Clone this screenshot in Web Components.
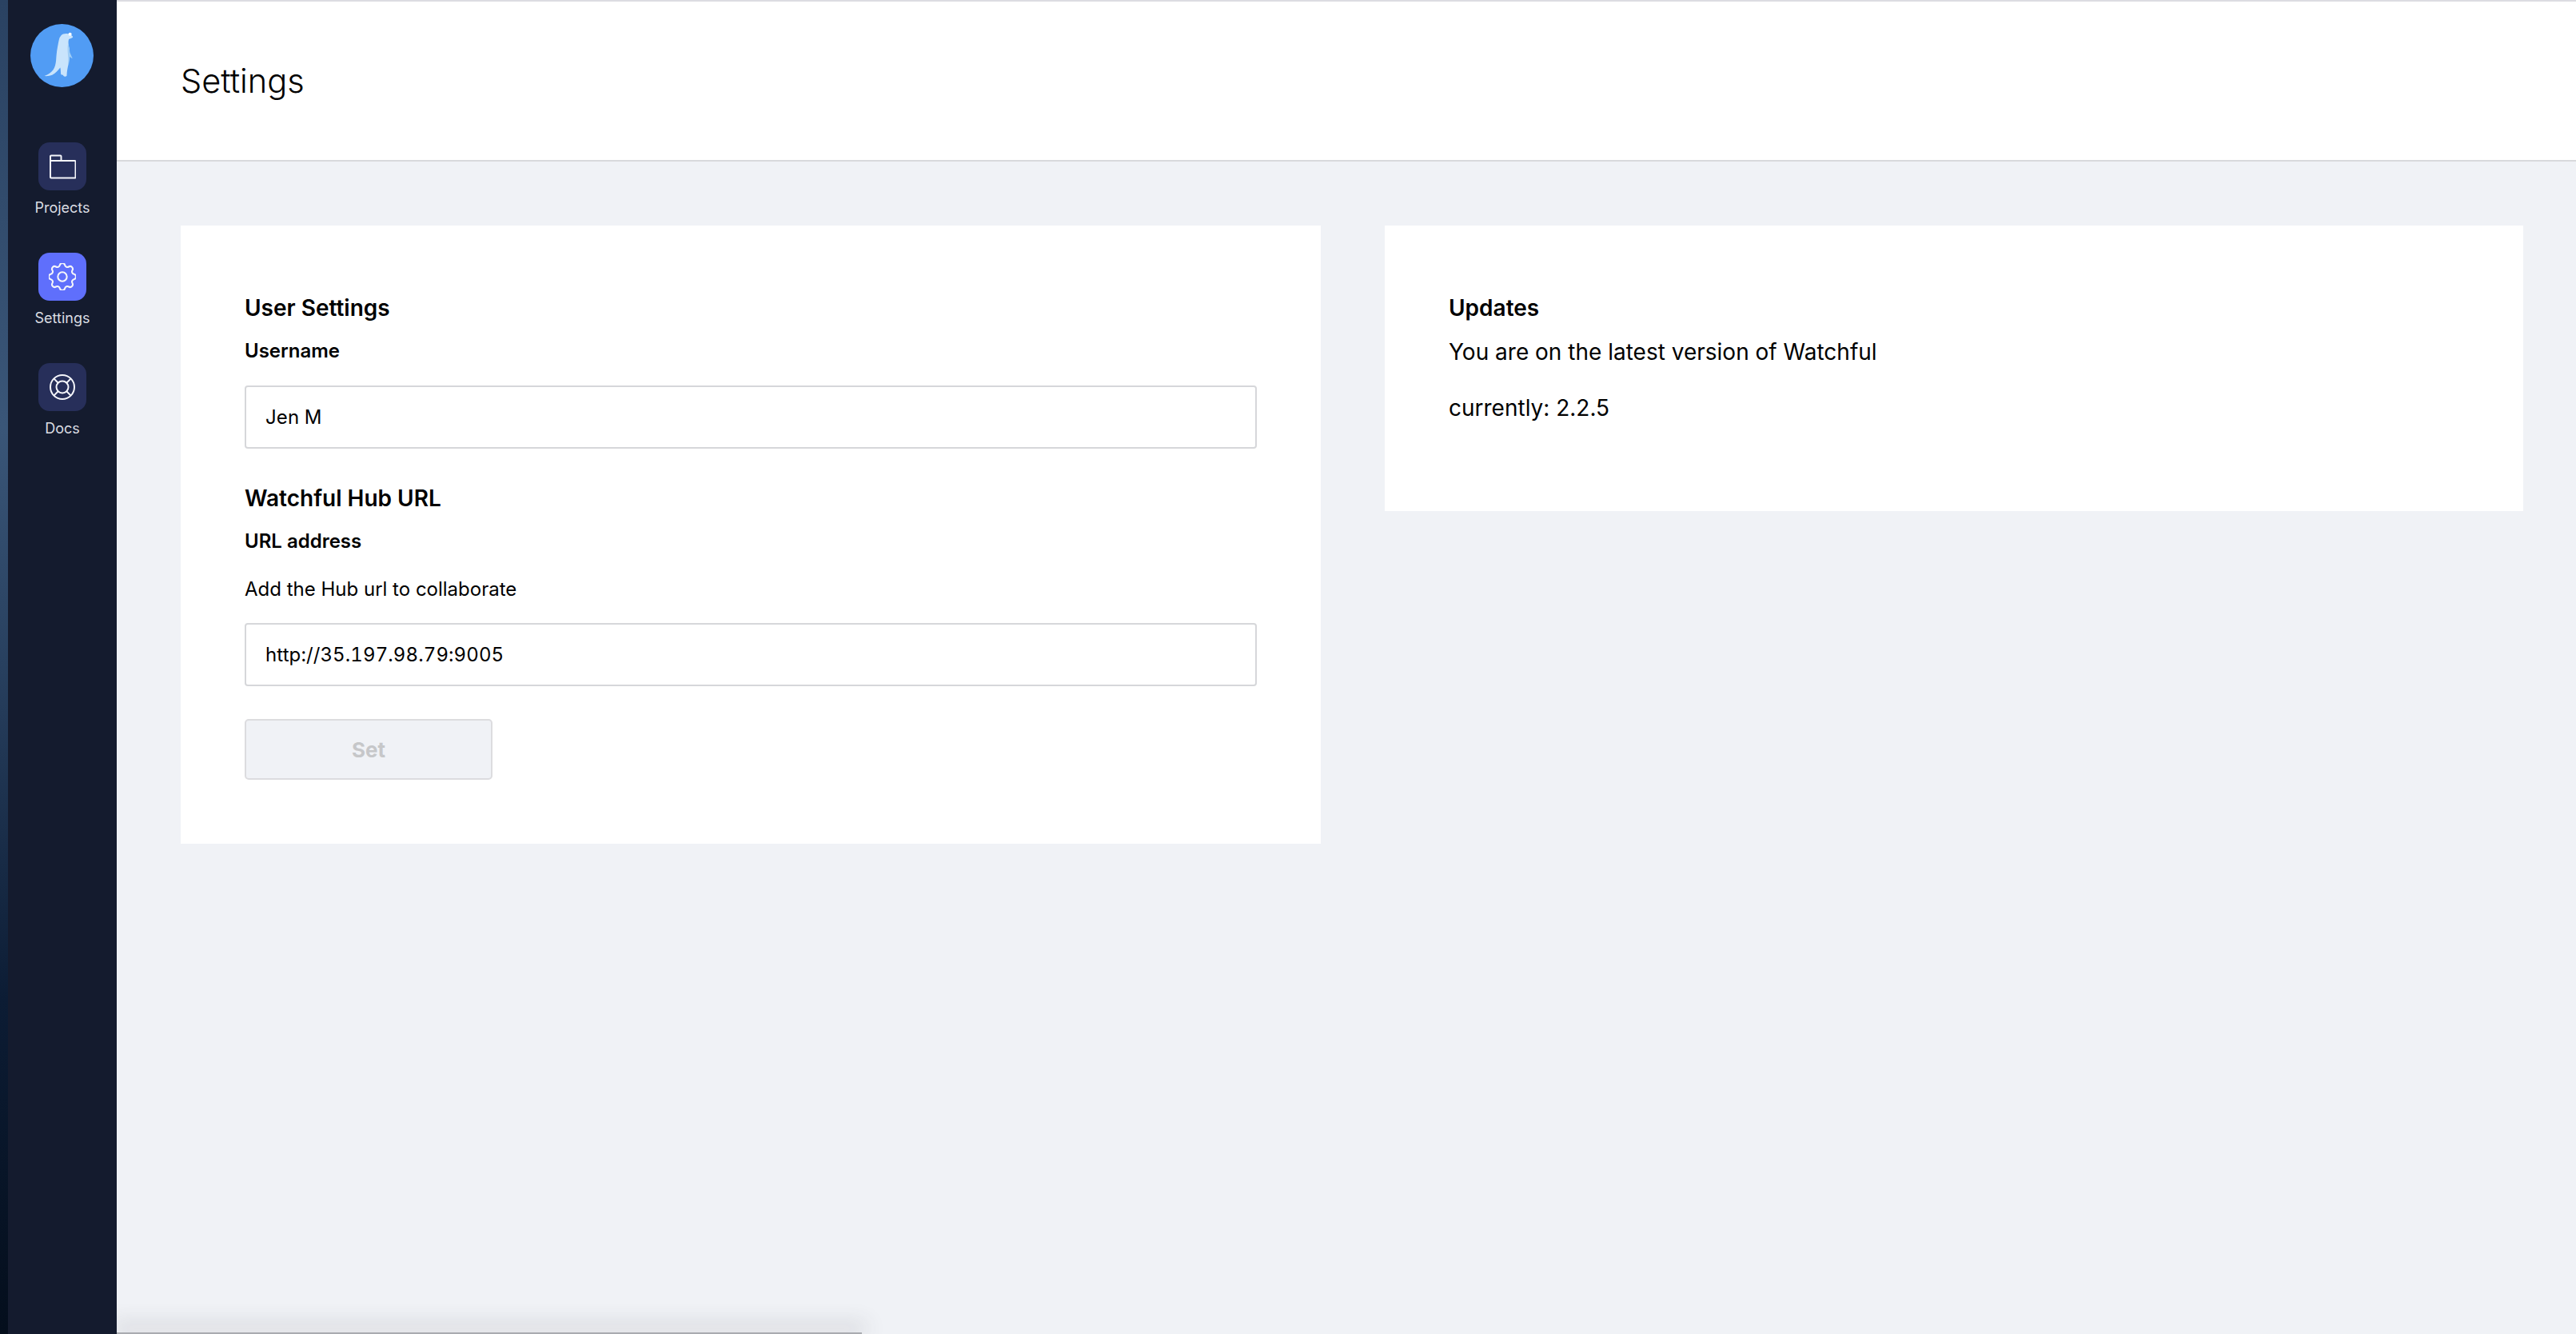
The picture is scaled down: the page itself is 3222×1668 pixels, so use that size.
<!DOCTYPE html>
<html lang="en">
<head>
<meta charset="utf-8">
<title>Settings</title>
<style>
    html, body {
        margin: 0;
        height: 100%;
        overflow: hidden;
    }

    body {
        font-family: Inter, 'Liberation Sans', sans-serif;
        color: #000;
    }
</style>
</head>
<body>
<app-shell>
    <side-nav slot="nav">
        <nav-item label="Projects" icon="folder"></nav-item>
        <nav-item label="Settings" icon="cog" active></nav-item>
        <nav-item label="Docs" icon="lifebuoy"></nav-item>
    </side-nav>
    <page-header slot="header">Settings</page-header>

    <panel-card tall>
        <section-title>User Settings</section-title>
        <text-field label="Username" value="Jen M"></text-field>
        <section-title class="second">Watchful Hub URL</section-title>
        <text-field label="URL address" hint="Add the Hub url to collaborate" value="http://35.197.98.79:9005"></text-field>
        <set-button>Set</set-button>
    </panel-card>

    <panel-card>
        <section-title>Updates</section-title>
        <update-note>
            <span>You are on the latest version of Watchful</span>
            <span>currently: 2.2.5</span>
        </update-note>
    </panel-card>
</app-shell>

<script>
const ICONS = {
    folder: `<svg width="34" height="32" viewBox="0 0 34 32" fill="none" stroke="currentColor" stroke-width="2" stroke-linejoin="round">
        <path d="M2 29.5V3.5a1 1 0 0 1 1-1h11.5a1 1 0 0 1 1 1V9h17a1 1 0 0 1 1 1v19.500a1 1 0 0 1-1 1H3a1 1 0 0 1-1-1z"/>
        <path d="M2 9h14"/>
    </svg>`,
    cog: `<svg width="34" height="34" viewBox="3 3 18 18" fill="none" stroke="currentColor" stroke-width="1.1" stroke-linejoin="round">
        <path d="M10.325 4.317c.426-1.756 2.924-1.756 3.35 0a1.724 1.724 0 002.573 1.066c1.543-.94 3.31.826 2.37 2.37a1.724 1.724 0 001.065 2.572c1.756.426 1.756 2.924 0 3.35a1.724 1.724 0 00-1.066 2.573c.94 1.543-.826 3.31-2.37 2.37a1.724 1.724 0 00-2.572 1.065c-.426 1.756-2.924 1.756-3.35 0a1.724 1.724 0 00-2.573-1.066c-1.543.94-3.31-.826-2.37-2.37a1.724 1.724 0 00-1.065-2.572c-1.756-.426-1.756-2.924 0-3.35a1.724 1.724 0 001.066-2.573c-.94-1.543.826-3.31 2.37-2.37.996.608 2.296.07 2.572-1.065z"/>
        <circle cx="12" cy="12" r="3"/>
    </svg>`,
    lifebuoy: `<svg width="34" height="34" viewBox="0 0 34 34" fill="none" stroke="currentColor" stroke-width="2">
        <circle cx="17" cy="17" r="15"/>
        <circle cx="17" cy="17" r="7.500"/>
        <path d="M6.400 6.400l5.300 5.300M27.600 6.400l-5.300 5.300M6.400 27.600l5.300-5.300M27.600 27.600l-5.300-5.300"/>
    </svg>`
};

class AppShell extends HTMLElement {
    constructor() {
        super();
        this.shadow = this.attachShadow({ mode: 'open' });
    }

    connectedCallback() {
        this.shadow.innerHTML = `
            <style>
                * {
                    box-sizing: border-box;
                }

                :host {
                    display: grid;
                    grid-template-columns: 10px 136px 1fr;
                    height: 100vh;
                    position: relative;
                    background: #f0f2f6;
                    overflow: hidden;
                }

                .wallpaper {
                    background: linear-gradient(180deg, #2a4262 0%, #3a5678 32%, #28405f 50%, #0c1c34 75%, #040e1c 100%);
                }

                .window {
                    display: flex;
                    flex-direction: column;
                    min-width: 0;
                    grid-column: 3;
                }

                .content {
                    flex: 1;
                    display: grid;
                    grid-template-columns: 1426px 1424px;
                    align-items: start;
                    gap: 80px;
                    padding: 80px 66px 0 80px;
                }

                .edge {
                    position: absolute;
                    top: 0;
                    left: 10px;
                    right: 0;
                    height: 2px;
                    background: #dcdce2;
                }

                /* the window behind, only its shadow and top edge show at the bottom */
                .behind {
                    position: absolute;
                    left: 146px;
                    bottom: 0;
                    width: 932px;
                    height: 2px;
                    background: #a9abb0;
                    box-shadow: 0 -6px 26px 6px rgba(60, 62, 70, .16);
                }
            </style>

            <div class="wallpaper"></div>
            <slot name="nav"></slot>
            <div class="window">
                <slot name="header"></slot>
                <div class="content"><slot></slot></div>
            </div>
            <div class="edge"></div>
            <div class="behind"></div>
        `;
    }
}

class SideNav extends HTMLElement {
    constructor() {
        super();
        this.shadow = this.attachShadow({ mode: 'open' });
    }

    connectedCallback() {
        this.shadow.innerHTML = `
            <style>
                :host {
                    display: flex;
                    flex-direction: column;
                    align-items: center;
                    position: relative;
                    z-index: 1;
                    background: #141b2e;
                    padding-top: 30px;
                }

                .logo {
                    display: block;
                    margin: 0 1px 69px 0;
                }

                .items {
                    display: flex;
                    flex-direction: column;
                    align-items: center;
                    gap: 40px;
                }
            </style>

            <svg class="logo" width="79" height="79" viewBox="0 0 78 78">
                <circle cx="39" cy="39" r="39" fill="#519cf4"/>
                <path fill="#c9e4fc" d="M38 14c1.500-1.700 5-2.500 8-2 2 .1 3 .1 4 1.300 1.500 1.200 3 2.200 2.300 3.200-1.300 1.100-3.300 1.400-4.800 2.300-1 3-.6 6.500.3 10 .8 3 .8 6.500.4 10-.2 4-.6 8-1.500 12-.8 4-1.600 8-1.700 12 .3 1.400-.7 2.400-2.300 2.200-1.500-.1-2.200-1-2.300-2-1.200-.1-2.300 0-2.700-1-.3-3.300-.2-6-.8-8.300-3 4-6 7-10 9.200-2.500 1.200-7 1.700-9.700 1.300 4-1.400 8.500-4.200 11-7.700 2.100-3 3.100-7 3.500-11.500.4-6 .8-11 1.800-16 .8-4.500 1.300-8 2.500-12z"/>
                <path fill="#9fcdf6" d="M46.500 24c1 4 2 8 2.200 11 1 2.500 2.300 5 3.300 7.500-1.200-.2-2.300-.9-3.300-2.200-.4 3.500-.8 7.500-1.700 11.200-.4-5-.2-9.500-.6-13.500-.4-4.500-.7-9.500.1-14z"/>
                <circle cx="49" cy="12.500" r="2" fill="#ffffff"/>
            </svg>
            <div class="items"><slot></slot></div>
        `;
    }
}

class NavItem extends HTMLElement {
    constructor() {
        super();
        this.shadow = this.attachShadow({ mode: 'open' });
    }

    connectedCallback() {
        const active = this.hasAttribute('active');
        this.shadow.innerHTML = `
            <style>
                :host {
                    display: flex;
                    flex-direction: column;
                    align-items: center;
                    height: 98px;
                }

                .tile {
                    width: 60px;
                    height: 60px;
                    flex: none;
                    display: flex;
                    align-items: center;
                    justify-content: center;
                    border-radius: 14px;
                    color: #f4f5fa;
                    background: ${active ? '#5f6ffc' : '#272f5a'};
                }

                svg {
                    display: block;
                }

                span {
                    margin-top: 9px;
                    font-size: 18px;
                    line-height: 26px;
                    color: #dbdde2;
                    white-space: nowrap;
                }
            </style>

            <div class="tile">${ICONS[this.getAttribute('icon')]}</div>
            <span>${this.getAttribute('label')}</span>
        `;
    }
}

class PageHeader extends HTMLElement {
    constructor() {
        super();
        this.shadow = this.attachShadow({ mode: 'open' });
    }

    connectedCallback() {
        this.shadow.innerHTML = `
            <style>
                :host {
                    display: flex;
                    align-items: center;
                    box-sizing: border-box;
                    height: 202px;
                    padding: 2px 80px 0;
                    background: #fff;
                    border-bottom: 2px solid #d8d9dc;
                    font-size: 41.500px;
                    font-weight: 300;
                    color: #000;
                }
            </style>

            <slot></slot>
        `;
    }
}

class PanelCard extends HTMLElement {
    constructor() {
        super();
        this.shadow = this.attachShadow({ mode: 'open' });
    }

    connectedCallback() {
        this.shadow.innerHTML = `
            <style>
                :host {
                    display: block;
                    box-sizing: border-box;
                    padding: 83px 80px 80px;
                    background: #fff;
                }
            </style>

            <slot></slot>
        `;
    }
}

class SectionTitle extends HTMLElement {
    constructor() {
        super();
        this.shadow = this.attachShadow({ mode: 'open' });
    }

    connectedCallback() {
        this.shadow.innerHTML = `
            <style>
                :host {
                    display: block;
                    font-size: 28px;
                    font-weight: 600;
                    line-height: 40px;
                }

                :host(.second) {
                    margin-top: 42px;
                }
            </style>

            <slot></slot>
        `;
    }
}

class TextField extends HTMLElement {
    constructor() {
        super();
        this.shadow = this.attachShadow({ mode: 'open' });
    }

    connectedCallback() {
        const hint = this.getAttribute('hint');
        this.shadow.innerHTML = `
            <style>
                * {
                    box-sizing: border-box;
                }

                :host {
                    display: block;
                    font-size: 24px;
                    margin-top: 19px;
                }

                .label {
                    display: block;
                    font-weight: 600;
                    line-height: 30px;
                    margin-bottom: 28px;
                }

                .hint {
                    line-height: 30px;
                    padding-top: 2px;
                    margin-bottom: 27px;
                }

                input {
                    display: block;
                    width: 100%;
                    height: 79px;
                    padding: 0 24px;
                    border: 2px solid #d6d7da;
                    border-radius: 4px;
                    background: #fff;
                    font: inherit;
                    font-variant-numeric: tabular-nums;
                    letter-spacing: .1px;
                    color: #000;
                    outline: none;
                }
            </style>

            <label class="label" for="field">${this.getAttribute('label')}</label>
            ${hint ? `<div class="hint">${hint}</div>` : ''}
            <input id="field" type="text" value="${this.getAttribute('value')}">
        `;
    }
}

class SetButton extends HTMLElement {
    constructor() {
        super();
        this.shadow = this.attachShadow({ mode: 'open' });
    }

    connectedCallback() {
        this.shadow.innerHTML = `
            <style>
                :host {
                    display: block;
                    margin-top: 41px;
                }

                button {
                    display: block;
                    box-sizing: border-box;
                    width: 310px;
                    height: 76px;
                    border: 2px solid #dcdcdf;
                    border-radius: 5px;
                    background: #f0f2f6;
                    font: 700 26px Inter, 'Liberation Sans', sans-serif;
                    color: #c6c7c9;
                }
            </style>

            <button disabled><slot></slot></button>
        `;
    }
}

class UpdateNote extends HTMLElement {
    constructor() {
        super();
        this.shadow = this.attachShadow({ mode: 'open' });
    }

    connectedCallback() {
        this.shadow.innerHTML = `
            <style>
                :host {
                    display: flex;
                    flex-direction: column;
                    gap: 30px;
                    margin-top: 15px;
                    padding-bottom: 29px;
                    font-size: 28px;
                    line-height: 40px;
                }

                ::slotted(span) {
                    display: block;
                }
            </style>

            <slot></slot>
        `;
    }
}

customElements.define('app-shell', AppShell);
customElements.define('side-nav', SideNav);
customElements.define('nav-item', NavItem);
customElements.define('page-header', PageHeader);
customElements.define('panel-card', PanelCard);
customElements.define('section-title', SectionTitle);
customElements.define('text-field', TextField);
customElements.define('set-button', SetButton);
customElements.define('update-note', UpdateNote);
</script>
</body>
</html>
